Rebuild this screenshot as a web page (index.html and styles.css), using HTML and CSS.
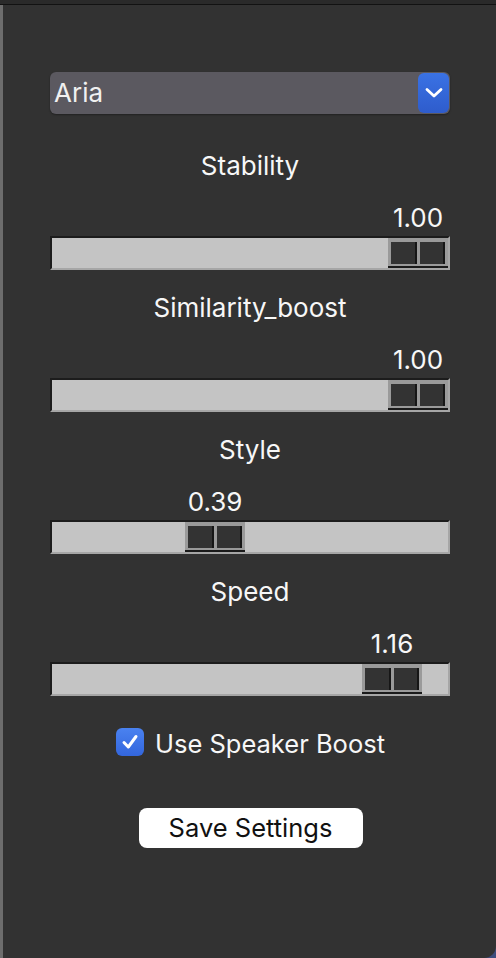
FILE: index.html
```html
<!DOCTYPE html>
<html>
<head>
<meta charset="utf-8">
<link rel="stylesheet" href="styles.css">
</head>
<body>
<div class="window">
  <div class="topbar"></div>
  <div class="content">
    <div class="panel">
      <div class="select">
        <span class="select-text">Aria</span>
        <span class="select-btn">
          <svg width="18" height="12" viewBox="0 0 18 12"><polyline points="2,2.5 9,9 16,2.5" fill="none" stroke="#fff" stroke-width="2.8" stroke-linecap="round" stroke-linejoin="round"/></svg>
        </span>
      </div>

      <div class="slider first">
        <div class="label">Stability</div>
        <div class="value-row" style="padding-left:338px"><span class="value">1.00</span></div>
        <div class="track"><div class="thumb" style="margin-left:336px"><span class="sq"></span><span class="sq"></span></div></div>
      </div>

      <div class="slider">
        <div class="label">Similarity_boost</div>
        <div class="value-row" style="padding-left:338px"><span class="value">1.00</span></div>
        <div class="track"><div class="thumb" style="margin-left:336px"><span class="sq"></span><span class="sq"></span></div></div>
      </div>

      <div class="slider">
        <div class="label">Style</div>
        <div class="value-row" style="padding-left:135px"><span class="value">0.39</span></div>
        <div class="track"><div class="thumb" style="margin-left:133px"><span class="sq"></span><span class="sq"></span></div></div>
      </div>

      <div class="slider">
        <div class="label">Speed</div>
        <div class="value-row" style="padding-left:312px"><span class="value">1.16</span></div>
        <div class="track"><div class="thumb" style="margin-left:310px"><span class="sq"></span><span class="sq"></span></div></div>
      </div>

      <label class="check-row">
        <span class="checkbox">
          <svg width="20" height="20" viewBox="0 0 20 20"><polyline points="4,10.5 8.3,15 16,4.5" fill="none" stroke="#fff" stroke-width="3" stroke-linecap="round" stroke-linejoin="round"/></svg>
        </span>
        <span class="check-text">Use Speaker Boost</span>
      </label>

      <div class="btn-row">
        <button class="save">Save Settings</button>
      </div>
    </div>
  </div>
</div>
</body>
</html>
```

FILE: styles.css
```css
html, body {
  margin: 0;
  padding: 0;
}
body {
  width: 496px;
  height: 958px;
  background: #3d4c7c;
  font-family: Inter, "Noto Sans", "DejaVu Sans", sans-serif;
  overflow: hidden;
}
.window {
  width: 496px;
  height: 958px;
  display: flex;
  flex-direction: column;
}
.topbar {
  height: 4px;
  background: #2a2a2a;
  border-bottom: 1px solid #121212;
  flex: none;
}
.content {
  flex: 1;
  background: #323232;
  border-left: 3px solid #6d6d6d;
  border-bottom-right-radius: 12px;
}
.panel {
  width: 400px;
  padding: 67px 0 0 47px;
  display: flex;
  flex-direction: column;
}
.select {
  height: 42px;
  border-radius: 6px;
  background: #5b5960;
  display: flex;
  align-items: center;
  justify-content: space-between;
  box-shadow: 0 1px 2px rgba(0,0,0,0.35);
}
.select-text {
  color: #f0f0f0;
  font-size: 26px;
  padding-left: 4px;
  line-height: 42px;
}
.select-btn {
  width: 31px;
  height: 40px;
  margin-right: 1px;
  border-radius: 6px;
  background: linear-gradient(#3a72e4, #2e5ccc);
  display: flex;
  align-items: center;
  justify-content: center;
}
.slider {
  display: flex;
  flex-direction: column;
  margin-top: 21px;
}
.slider.first {
  margin-top: 35px;
}
.label {
  height: 30px;
  line-height: 34px;
  text-align: center;
  color: #f7f7f7;
  font-size: 26px;
}
.value-row {
  height: 30px;
  margin-top: 23px;
  display: flex;
}
.value {
  width: 60px;
  text-align: center;
  line-height: 32px;
  color: #f7f7f7;
  font-size: 26px;
  white-space: nowrap;
}
.track {
  margin-top: 4px;
  height: 34px;
  box-sizing: border-box;
  border-style: solid;
  border-width: 2px;
  border-color: #1c1c1c #a6a6a6 #a6a6a6 #1c1c1c;
  background: #c4c4c4;
  display: flex;
}
.thumb {
  width: 60px;
  height: 30px;
  box-sizing: border-box;
  background: #9a9a9a;
  padding: 4px 3px 2px 3px;
  display: flex;
  gap: 3px;
  border-bottom: 2px solid #1a1a1a;
}
.sq {
  flex: 1;
  background: #333333;
  border-right: 2px solid #161616;
}
.check-row {
  margin-top: 32px;
  display: flex;
  align-items: center;
  justify-content: center;
  gap: 11px;
  height: 28px;
  padding-left: 1px;
}
.checkbox {
  width: 28px;
  height: 28px;
  border-radius: 6px;
  background: linear-gradient(#4a82f0, #3366dd);
  display: flex;
  align-items: center;
  justify-content: center;
}
.check-text {
  color: #f7f7f7;
  font-size: 25.5px;
  line-height: 30px;
  margin-top: 3px;
}
.btn-row {
  margin-top: 52px;
  display: flex;
  justify-content: center;
  padding-left: 1px;
}
.save {
  width: 224px;
  height: 40px;
  border: none;
  border-radius: 8px;
  background: #ffffff;
  color: #111;
  font-family: Inter, "Noto Sans", sans-serif;
  font-size: 25.5px;
  line-height: 36px;
  padding: 0;
}
```
